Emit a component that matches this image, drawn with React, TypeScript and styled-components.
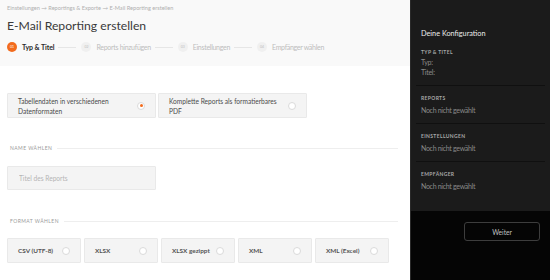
import React from 'react'
import styled, { createGlobalStyle } from 'styled-components'

const GlobalStyle = createGlobalStyle`
  html, body {
    margin: 0;
    padding: 0;
    background: #ffffff;
    font-family: Lato, "Open Sans", Arial, sans-serif;
  }
  * { box-sizing: border-box; }
`

const steps = [
  { no: '01', label: 'Typ & Titel', active: true },
  { no: '02', label: 'Reports hinzufügen' },
  { no: '03', label: 'Einstellungen' },
  { no: '04', label: 'Empfänger wählen' },
]

const formats = ['CSV (UTF-8)', 'XLSX', 'XLSX gezippt', 'XML', 'XML (Excel)']

const config = [
  { title: 'Typ & Titel', lines: ['Typ:', 'Titel:'] },
  { title: 'Reports', lines: ['Noch nicht gewählt'] },
  { title: 'Einstellungen', lines: ['Noch nicht gewählt'] },
  { title: 'Empfänger', lines: ['Noch nicht gewählt'] },
]

const App = () => {
  return (
    <>
      <GlobalStyle />
      <Page>
        <Main>
          <Header>
            <Breadcrumb>Einstellungen → Reportings &amp; Exporte → E-Mail Reporting erstellen</Breadcrumb>
            <Title>E-Mail Reporting erstellen</Title>
            <Stepper>
              {steps.map((s, i) => (
                <React.Fragment key={s.no}>
                  {i > 0 && <StepLine />}
                  <Step>
                    <StepDot $active={s.active}>{s.no}</StepDot>
                    <StepLabel $active={s.active}>{s.label}</StepLabel>
                  </Step>
                </React.Fragment>
              ))}
            </Stepper>
          </Header>

          <Body>
            <TypeRow>
              <TypeCard>
                <CardText>Tabellendaten in verschiedenen Datenformaten</CardText>
                <Radio $checked />
              </TypeCard>
              <TypeCard>
                <CardText>Komplette Reports als formatierbares PDF</CardText>
                <Radio />
              </TypeCard>
            </TypeRow>

            <SectionHead>
              <SectionLabel>Name wählen</SectionLabel>
              <SectionRule />
            </SectionHead>
            <NameInput placeholder="Titel des Reports" />

            <SectionHead $top={28}>
              <SectionLabel>Format wählen</SectionLabel>
              <SectionRule />
            </SectionHead>
            <FormatRow>
              {formats.map((f) => (
                <FormatCard key={f}>
                  <FormatText>{f}</FormatText>
                  <Radio />
                </FormatCard>
              ))}
            </FormatRow>
          </Body>
        </Main>

        <Sidebar>
          <ConfigPanel>
            <ConfigTitle>Deine Konfiguration</ConfigTitle>
            {config.map((c, i) => (
              <ConfigBlock key={c.title} $first={i === 0} $last={i === config.length - 1}>
                <ConfigHead>{c.title}</ConfigHead>
                {c.lines.map((l, j) => (
                  <ConfigLine key={l} $gap={j === 0 ? (i === 0 ? 1 : 3) : 0}>
                    {l}
                  </ConfigLine>
                ))}
              </ConfigBlock>
            ))}
          </ConfigPanel>
          <Actions>
            <NextButton>Weiter</NextButton>
          </Actions>
        </Sidebar>
      </Page>
    </>
  )
}

const Page = styled.div`
  display: flex;
  width: 550px;
  height: 280px;
  overflow: hidden;
`

const Main = styled.div`
  width: 410px;
  flex-shrink: 0;
  display: flex;
  flex-direction: column;
`

const Header = styled.div`
  height: 66px;
  background: #f9f9f9;
  padding: 4px 0 0 7px;
`

const Breadcrumb = styled.div`
  font-size: 5.6px;
  color: #b0b0b0;
  line-height: 7px;
`

const Title = styled.h1`
  margin: 6px 0 0;
  font-size: 12.2px;
  font-weight: 400;
  color: #3a3a3a;
  line-height: 18px;
`

const Stepper = styled.div`
  display: flex;
  align-items: center;
  margin-top: 7px;
`

const Step = styled.div`
  display: flex;
  align-items: center;
  gap: 5px;
`

const StepDot = styled.div<{ $active?: boolean }>`
  width: 10px;
  height: 10px;
  border-radius: 50%;
  background: ${(p) => (p.$active ? '#f26b1d' : '#f0f0f0')};
  color: ${(p) => (p.$active ? '#ffffff' : '#bdbdbd')};
  font-size: 3.5px;
  display: flex;
  align-items: center;
  justify-content: center;
`

const StepLabel = styled.span<{ $active?: boolean }>`
  font-size: 7px;
  letter-spacing: ${(p) => (p.$active ? '-0.1px' : '-0.3px')};
  font-weight: ${(p) => (p.$active ? 700 : 400)};
  color: ${(p) => (p.$active ? '#2a2a2a' : '#bdbdbd')};
`

const StepLine = styled.div`
  width: 18px;
  height: 1px;
  background: #e6e6e6;
  margin: 0 5px 0 4px;
`

const Body = styled.div`
  padding: 27px 12px 0 7px;
`

const TypeRow = styled.div`
  display: flex;
  gap: 2px;
`

const Card = styled.div`
  background: #f4f4f4;
  border: 1px solid #e9e9e9;
  border-radius: 1px;
  display: flex;
  align-items: center;
  justify-content: space-between;
`

const TypeCard = styled(Card)`
  width: 149px;
  height: 25px;
  padding: 0 10px 0 10px;
`

const CardText = styled.div`
  width: 116px;
  font-size: 6.6px;
  line-height: 10px;
  color: #4a4a4a;
`

const Radio = styled.span<{ $checked?: boolean }>`
  width: 8px;
  height: 8px;
  border-radius: 50%;
  border: 1px solid #dadada;
  background: #ffffff;
  flex-shrink: 0;
  position: relative;
  &::after {
    content: '';
    display: ${(p) => (p.$checked ? 'block' : 'none')};
    position: absolute;
    left: 1.5px;
    top: 1.5px;
    width: 3px;
    height: 3px;
    border-radius: 50%;
    background: #f26b1d;
  }
`

const SectionHead = styled.div<{ $top?: number }>`
  display: flex;
  align-items: center;
  gap: 5px;
  margin-top: ${(p) => p.$top ?? 27}px;
  padding-left: 3px;
`

const SectionLabel = styled.span`
  font-size: 5px;
  letter-spacing: 0.45px;
  text-transform: uppercase;
  color: #9a9a9a;
  white-space: nowrap;
`

const SectionRule = styled.div`
  flex: 1;
  height: 1px;
  background: #eeeeee;
`

const NameInput = styled.input`
  display: block;
  margin-top: 15px;
  width: 149px;
  height: 24px;
  background: #f4f4f4;
  border: 1px solid #e9e9e9;
  border-radius: 1px;
  padding: 0 11px;
  font-family: inherit;
  font-size: 6.6px;
  outline: none;
  &::placeholder {
    color: #b4b4b4;
  }
`

const FormatRow = styled.div`
  display: flex;
  gap: 3px;
  margin-top: 14px;
`

const FormatCard = styled(Card)`
  width: 74px;
  height: 25px;
  padding: 0 10px 0 10px;
`

const FormatText = styled.span`
  font-size: 6.4px;
  font-weight: 700;
  color: #555555;
`

const Sidebar = styled.div`
  flex: 1;
  background: #050505;
  border-left: 1px solid #2a2a2a;
  display: flex;
  flex-direction: column;
`

const ConfigPanel = styled.div`
  background: #1b1b1b;
  height: 211px;
  padding: 29px 5px 0 5px;
`

const ConfigTitle = styled.div`
  font-size: 7.3px;
  color: #ececec;
  padding-left: 5px;
  line-height: 10px;
`

const ConfigBlock = styled.div<{ $first?: boolean; $last?: boolean }>`
  padding: ${(p) => (p.$first ? '9px' : '8px')} 5px 8px;
  border-bottom: ${(p) => (p.$last ? 'none' : '1px solid #101010')};
`

const ConfigHead = styled.div`
  font-size: 5px;
  font-weight: 700;
  letter-spacing: 0.35px;
  text-transform: uppercase;
  color: #a8a8a8;
  line-height: 8px;
`

const ConfigLine = styled.div<{ $gap: number }>`
  font-size: 7px;
  letter-spacing: -0.3px;
  color: #8a8a8a;
  line-height: 10px;
  margin-top: ${(p) => p.$gap}px;
`

const Actions = styled.div`
  display: flex;
  justify-content: flex-end;
  padding: 11px 10px 0 0;
`

const NextButton = styled.button`
  width: 76px;
  height: 19px;
  background: transparent;
  border: 1px solid #3d3d3d;
  border-radius: 3px;
  color: #c0c0c0;
  font-family: inherit;
  font-size: 6.6px;
`

export default App
